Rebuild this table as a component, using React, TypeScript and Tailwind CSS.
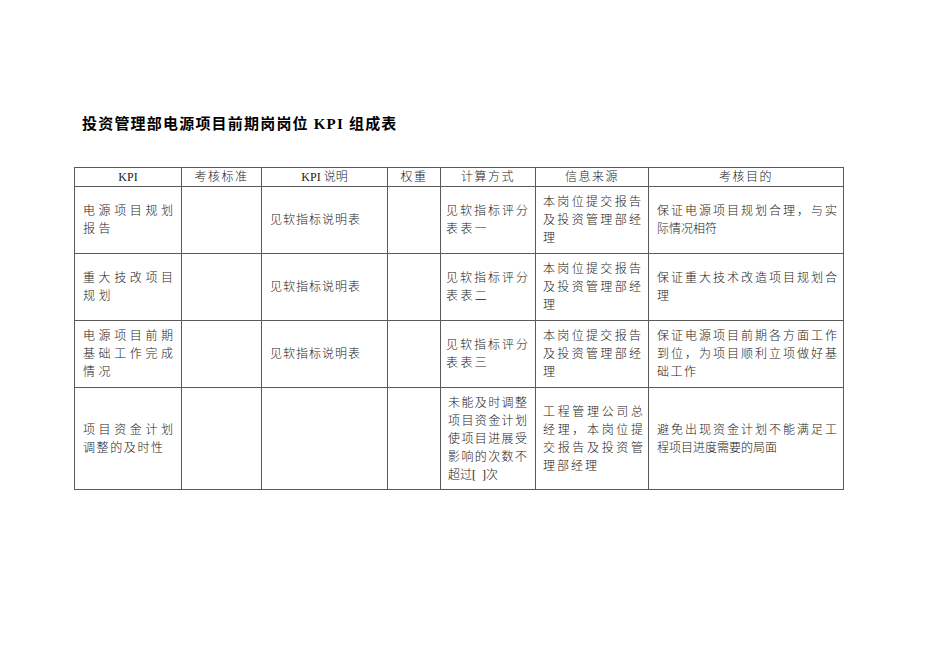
const font = { fontFamily: '"Liberation Serif", "Noto Sans CJK SC", serif' }

type CellSpec = {
  lines?: string[]
  pl?: string
  pr?: string
  last?: string
}

const cols = [107, 80, 126, 53, 95, 113, 195]

const headers = ['KPI', '考核标准', 'KPI 说明', '权重', '计算方式', '信息来源', '考核目的']

const note: CellSpec = { lines: ['见软指标说明表'], pl: 'pl-[8px]', last: 'tracking-[1px]' }
const source: CellSpec = { lines: ['本岗位提交报告', '及投资管理部经', '理'], pl: 'pl-[7px]', pr: 'pr-[7px]' }

const rows: { h: string; cells: CellSpec[] }[] = [
  {
    h: 'h-[67px]',
    cells: [
      { lines: ['电源项目规划', '报告'], pl: 'pl-[8px]', pr: 'pr-[8px]', last: 'tracking-[3.5px]' },
      {},
      note,
      {},
      { lines: ['见软指标评分', '表表一'], pl: 'pl-[5px]', pr: 'pr-[7px]', last: 'tracking-[2.4px]' },
      source,
      { lines: ['保证电源项目规划合理，与实', '际情况相符'], pl: 'pl-[8px]', pr: 'pr-[6px]' },
    ],
  },
  {
    h: 'h-[67px]',
    cells: [
      { lines: ['重大技改项目', '规划'], pl: 'pl-[8px]', pr: 'pr-[8px]', last: 'tracking-[3.5px]' },
      {},
      note,
      {},
      { lines: ['见软指标评分', '表表二'], pl: 'pl-[5px]', pr: 'pr-[7px]', last: 'tracking-[2.4px]' },
      source,
      { lines: ['保证重大技术改造项目规划合', '理'], pl: 'pl-[8px]', pr: 'pr-[6px]' },
    ],
  },
  {
    h: 'h-[67px]',
    cells: [
      { lines: ['电源项目前期', '基础工作完成', '情况'], pl: 'pl-[8px]', pr: 'pr-[8px]', last: 'tracking-[3.5px]' },
      {},
      note,
      {},
      { lines: ['见软指标评分', '表表三'], pl: 'pl-[5px]', pr: 'pr-[7px]', last: 'tracking-[2.4px]' },
      source,
      {
        lines: ['保证电源项目前期各方面工作', '到位，为项目顺利立项做好基', '础工作'],
        pl: 'pl-[8px]',
        pr: 'pr-[6px]',
        last: 'tracking-[1.5px]',
      },
    ],
  },
  {
    h: 'h-[102px]',
    cells: [
      { lines: ['项目资金计划', '调整的及时性'], pl: 'pl-[8px]', pr: 'pr-[8px]', last: 'tracking-[1.6px]' },
      {},
      {},
      {},
      {
        lines: ['未能及时调整', '项目资金计划', '使项目进展受', '影响的次数不', '超过[\u00a0\u00a0]次'],
        pl: 'pl-[7px]',
        pr: 'pr-[8px]',
      },
      { lines: ['工程管理公司总', '经理，本岗位提', '交报告及投资管', '理部经理'], pl: 'pl-[7px]', pr: 'pr-[5px]', last: 'tracking-[2px]' },
      { lines: ['避免出现资金计划不能满足工', '程项目进度需要的局面'], pl: 'pl-[8px]', pr: 'pr-[6px]' },
    ],
  },
]

function Cell({ spec, h }: { spec: CellSpec; h: string }) {
  const lines = spec.lines ?? []
  return (
    <td className={`${h} border border-[#5a5a5a] align-middle ${spec.pl ?? 'pl-2'} ${spec.pr ?? 'pr-2'}`}>
      {lines.map((line, i) =>
        i < lines.length - 1 ? (
          <span key={i} className="block [text-align-last:justify] text-justify whitespace-nowrap">
            {line}
          </span>
        ) : (
          <span key={i} className={`block whitespace-pre ${spec.last ?? ''}`}>
            {line}
          </span>
        ),
      )}
    </td>
  )
}

export default function App() {
  return (
    <div className="w-[950px] h-[672px] bg-white text-[#1a1a1a] overflow-hidden" style={font}>
      <div className="pt-[114px] pl-[74px]">
        <h1 className="pl-[8px] text-[15px] leading-[20px] font-bold tracking-[1.2px] text-black">
          投资管理部电源项目前期岗岗位 KPI 组成表
        </h1>
        <table className="mt-[33px] table-fixed border-collapse w-[769px] text-[12px] leading-[18px] font-light">
          <colgroup>
            {cols.map((w, i) => (
              <col key={i} style={{ width: w }} />
            ))}
          </colgroup>
          <thead>
            <tr>
              {headers.map((t) => (
                <th
                  key={t}
                  className={`h-[19px] border border-[#5a5a5a] font-light text-center leading-[17px] p-0 ${
                    t.startsWith('KPI') ? 'tracking-normal' : 'tracking-[1.5px]'
                  }`}
                >
                  {t}
                </th>
              ))}
            </tr>
          </thead>
          <tbody>
            {rows.map((r, ri) => (
              <tr key={ri}>
                {r.cells.map((c, ci) => (
                  <Cell key={ci} spec={c} h={r.h} />
                ))}
              </tr>
            ))}
          </tbody>
        </table>
      </div>
    </div>
  )
}
